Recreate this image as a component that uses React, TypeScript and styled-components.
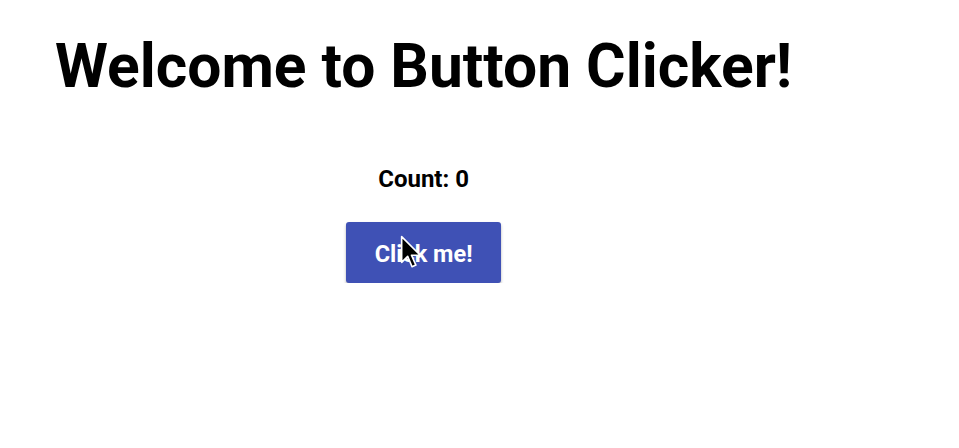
import styled, { createGlobalStyle } from 'styled-components'

const GlobalStyle = createGlobalStyle`
  html, body {
    margin: 0;
    background: #ffffff;
  }
  body {
    font-family: Roboto, "Noto Sans", sans-serif;
  }
`

const Page = styled.div`
  padding: 31px 0 0 55px;
`

const Wrapper = styled.div`
  display: inline-flex;
  flex-direction: column;
  align-items: center;
`

const Title = styled.h1`
  margin: 0;
  font-size: 60.5px;
  font-weight: 700;
  color: #000;
  line-height: 72px;
`

const Count = styled.p`
  margin: 61px 0 0;
  font-size: 24px;
  font-weight: 700;
  line-height: 30px;
  color: #000;
`

const ButtonWrap = styled.div`
  position: relative;
  margin-top: 28px;
`

const ClickButton = styled.button`
  display: block;
  width: 155px;
  height: 61px;
  border: none;
  border-radius: 3px;
  background: #3f51b5;
  color: #fff;
  font-family: Roboto, "Noto Sans", sans-serif;
  font-size: 23.5px;
  font-weight: 700;
  padding: 2px 0 0;
  box-shadow: 0 2px 3px rgba(0, 0, 0, 0.3);
  cursor: pointer;
`

const Cursor = styled.svg`
  position: absolute;
  left: 54px;
  top: 13px;
  pointer-events: none;
`

export default function App() {
  return (
    <>
      <GlobalStyle />
      <Page>
        <Wrapper>
          <Title>Welcome to Button Clicker!</Title>
          <Count>Count: 0</Count>
          <ButtonWrap>
            <ClickButton>Click me!</ClickButton>
            <Cursor width="23" height="35" viewBox="0 0 21 32">
              <path
                d="M1.5 1.5 L1.5 25 L7 19.5 L11 29 L14.5 27.5 L10.5 18.5 L18.5 18.5 Z"
                fill="#000"
                stroke="#fff"
                strokeWidth="1.5"
                strokeLinejoin="round"
              />
            </Cursor>
          </ButtonWrap>
        </Wrapper>
      </Page>
    </>
  )
}
